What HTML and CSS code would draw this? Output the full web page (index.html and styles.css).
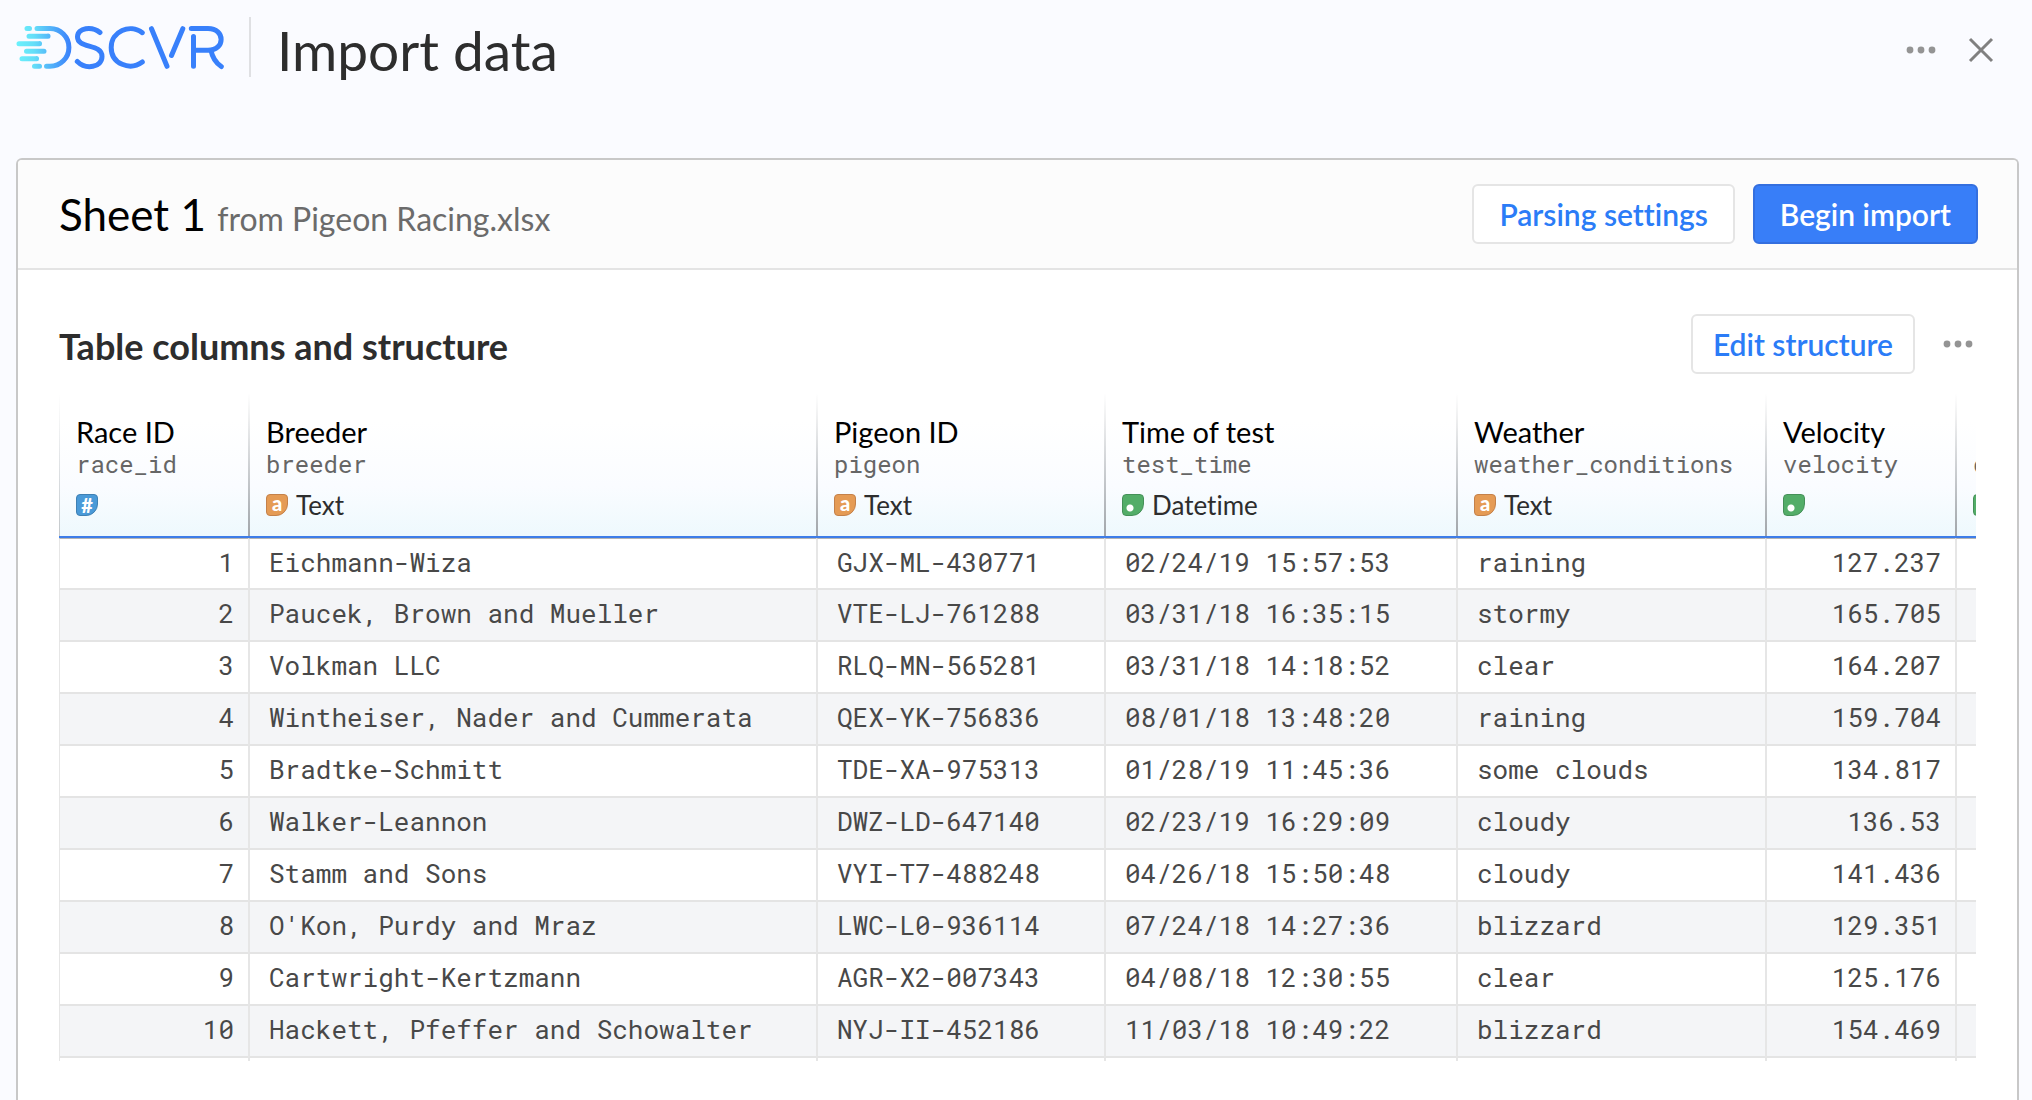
FILE: index.html
```html
<!DOCTYPE html>
<html lang="en">
<head>
<meta charset="utf-8">
<meta name="viewport" content="width=device-width, initial-scale=1">
<title>Import data</title>
<link rel="stylesheet" href="styles.css">
</head>
<body>
<header class="topbar">
  <a class="logo" href="#" aria-label="DSCVR home">
    <svg width="210" height="46" viewBox="15 24 210 46" fill="none" stroke-width="5" stroke-linecap="round" stroke-linejoin="round">
      <defs>
        <linearGradient id="fade" gradientUnits="userSpaceOnUse" x1="18" y1="0" x2="70" y2="0">
          <stop offset="0" stop-color="#6af0fb"/>
          <stop offset=".3" stop-color="#66dff8"/>
          <stop offset="1" stop-color="#3b82fb"/>
        </linearGradient>
      </defs>
      <g stroke="url(#fade)">
        <path d="M27 28.6H29.5V28.5M29 36.2H48V36M19 43.8H39.5V43.6M26.500 51.300H44V51.200M22 58.700H36.500V58.600M34.500 66.300H39.500V66.200"/>
        <path d="M37 28.500H50A18.900 18.900 0 0 1 50 66.300H46.500"/>
      </g>
      <g stroke="#3880fb">
        <path d="M100 32.500C92 26 77.500 27.500 77.500 37C77.500 49 102 43 102 56.500C102 67.500 86 70 77.300 61.500"/>
        <path d="M142.300 32.700C130 23.500 111.200 31 111.200 47.400C111.200 64 130 71 142.300 62"/>
        <path d="M151.500 28.700L167 66.300M182.800 28.700L171.500 55.500"/>
        <path d="M193.500 36.500V66.300M191.300 28.500H208C225.500 28.500 225.500 50.300 208 50.300H195M211 50.500C212.500 58 216 63 221.300 66.500"/>
      </g>
    </svg>
  </a>
  <h1 class="page-title">Import data</h1>
  <button class="icon-button" type="button" aria-label="More options">
    <svg width="30" height="8" viewBox="0 0 30 8" fill="#949494"><circle cx="4" cy="4" r="3.400"/><circle cx="15" cy="4" r="3.400"/><circle cx="26" cy="4" r="3.400"/></svg>
  </button>
  <button class="icon-button" type="button" aria-label="Close">
    <svg width="26" height="26" viewBox="0 0 26 26" stroke="#808080" stroke-width="3"><path d="M2 2L24 24M24 2L2 24"/></svg>
  </button>
</header>

<main class="panel">
  <div class="panel-header">
    <h2 class="sheet">Sheet 1 <span class="source">from Pigeon Racing.xlsx</span></h2>
    <button class="button" type="button">Parsing settings</button>
    <button class="button button-primary" type="button">Begin import</button>
  </div>
  <section class="panel-body">
    <div class="section-header">
      <h3 class="section-title">Table columns and structure</h3>
      <button class="button button-narrow" type="button">Edit structure</button>
      <button class="icon-button" type="button" aria-label="Table options">
        <svg width="30" height="8" viewBox="0 0 30 8" fill="#949494"><circle cx="4" cy="4" r="3.400"/><circle cx="15" cy="4" r="3.400"/><circle cx="26" cy="4" r="3.400"/></svg>
      </button>
    </div>
    <div class="table-wrap">
      <table class="data">
        <colgroup>
          <col class="col-race"><col class="col-breeder"><col class="col-pigeon"><col class="col-time"><col class="col-weather"><col class="col-velocity"><col class="col-next">
        </colgroup>
        <thead>
          <tr>
            <th scope="col"><span class="name">Race ID</span><span class="key">race_id</span><span class="type"><span class="badge badge-id">#</span></span></th>
            <th scope="col"><span class="name">Breeder</span><span class="key">breeder</span><span class="type"><span class="badge badge-text">a</span>Text</span></th>
            <th scope="col"><span class="name">Pigeon ID</span><span class="key">pigeon</span><span class="type"><span class="badge badge-text">a</span>Text</span></th>
            <th scope="col"><span class="name">Time of test</span><span class="key">test_time</span><span class="type"><span class="badge badge-number"></span>Datetime</span></th>
            <th scope="col"><span class="name">Weather</span><span class="key">weather_conditions</span><span class="type"><span class="badge badge-text">a</span>Text</span></th>
            <th scope="col"><span class="name">Velocity</span><span class="key">velocity</span><span class="type"><span class="badge badge-number"></span></span></th>
            <th scope="col"><span class="name">&nbsp;</span><span class="key">distance</span><span class="type"><span class="badge badge-number"></span></span></th>
          </tr>
        </thead>
        <tbody>
          <tr><td class="num">1</td><td>Eichmann-Wiza</td><td>GJX-ML-430771</td><td>02/24/19 15:57:53</td><td>raining</td><td class="num">127.237</td><td></td></tr>
          <tr><td class="num">2</td><td>Paucek, Brown and Mueller</td><td>VTE-LJ-761288</td><td>03/31/18 16:35:15</td><td>stormy</td><td class="num">165.705</td><td></td></tr>
          <tr><td class="num">3</td><td>Volkman LLC</td><td>RLQ-MN-565281</td><td>03/31/18 14:18:52</td><td>clear</td><td class="num">164.207</td><td></td></tr>
          <tr><td class="num">4</td><td>Wintheiser, Nader and Cummerata</td><td>QEX-YK-756836</td><td>08/01/18 13:48:20</td><td>raining</td><td class="num">159.704</td><td></td></tr>
          <tr><td class="num">5</td><td>Bradtke-Schmitt</td><td>TDE-XA-975313</td><td>01/28/19 11:45:36</td><td>some clouds</td><td class="num">134.817</td><td></td></tr>
          <tr><td class="num">6</td><td>Walker-Leannon</td><td>DWZ-LD-647140</td><td>02/23/19 16:29:09</td><td>cloudy</td><td class="num">136.53</td><td></td></tr>
          <tr><td class="num">7</td><td>Stamm and Sons</td><td>VYI-T7-488248</td><td>04/26/18 15:50:48</td><td>cloudy</td><td class="num">141.436</td><td></td></tr>
          <tr><td class="num">8</td><td>O'Kon, Purdy and Mraz</td><td>LWC-L0-936114</td><td>07/24/18 14:27:36</td><td>blizzard</td><td class="num">129.351</td><td></td></tr>
          <tr><td class="num">9</td><td>Cartwright-Kertzmann</td><td>AGR-X2-007343</td><td>04/08/18 12:30:55</td><td>clear</td><td class="num">125.176</td><td></td></tr>
          <tr><td class="num">10</td><td>Hackett, Pfeffer and Schowalter</td><td>NYJ-II-452186</td><td>11/03/18 10:49:22</td><td>blizzard</td><td class="num">154.469</td><td></td></tr>
        </tbody>
        <tfoot>
          <tr><td></td><td></td><td></td><td></td><td></td><td></td><td></td></tr>
        </tfoot>
      </table>
    </div>
  </section>
</main>
</body>
</html>
```
FILE: styles.css
```css
* { box-sizing: border-box; }

body {
  margin: 0;
  min-height: 100vh;
  display: flex;
  flex-direction: column;
  background: #fafbff;
  color: #2d2d2d;
  font-family: Lato, "Open Sans", sans-serif;
  font-variant-ligatures: none;
}

h1, h2, h3 { margin: 0; }

button {
  font-family: inherit;
  font-variant-ligatures: inherit;
  cursor: pointer;
}

/* Top bar */
.topbar {
  display: flex;
  align-items: center;
  height: 100px;
  padding: 0 38px 0 15px;
}

.logo {
  display: flex;
  align-items: center;
  height: 60px;
  margin-bottom: 6px;
  padding-right: 24px;
  border-right: 2px solid #dfe0e3;
}

.page-title {
  flex: 1;
  padding-left: 26px;
  font-size: 55px;
  line-height: 64px;
  font-weight: 400;
}

.icon-button {
  display: flex;
  padding: 0;
  border: 0;
  background: none;
}

.topbar .icon-button + .icon-button { margin-left: 32px; }

/* Panel */
.panel {
  flex: 1;
  margin: 58px 13px 0 16px;
  border: 2px solid #c8c8c8;
  border-bottom: 0;
  border-radius: 6px 6px 0 0;
  background: #fff;
}

.panel-header {
  display: flex;
  align-items: center;
  gap: 18px;
  height: 110px;
  padding: 0 39px 0 41px;
  border-bottom: 2px solid #e4e4e4;
  border-radius: 4px 4px 0 0;
  background: #fcfcfc;
}

.sheet {
  flex: 1;
  padding-top: 4px;
  color: #000;
  font-size: 44px;
  line-height: 52px;
  font-weight: 400;
}

.source {
  color: #6b6b6b;
  font-size: 32px;
}

.button {
  height: 60px;
  padding: 0 25px;
  border: 2px solid #e5e5e5;
  border-radius: 6px;
  background: #fff;
  color: #2b7cf7;
  font-size: 30px;
  line-height: 36px;
  font-weight: 600;
}

.button-narrow { padding: 0 20px; }

.button-primary {
  border-color: #346fdf;
  background: #387ef8;
  color: #fff;
}

.panel-body { padding: 44px 41px 39px; }

.section-header {
  display: flex;
  align-items: center;
  padding-right: 3px;
}

.section-title {
  flex: 1;
  padding-top: 4px;
  font-size: 36px;
  line-height: 44px;
  font-weight: 700;
}

.section-header .icon-button { margin-left: 28px; }

/* Data table */
.table-wrap {
  margin-top: 19px;
  overflow-x: auto;
  scrollbar-width: none;
}

.data {
  width: 2100px;
  table-layout: fixed;
  border-collapse: separate;
  border-spacing: 0;
}

.col-race { width: 189px; }
.col-breeder { width: 568px; }
.col-pigeon { width: 288px; }
.col-time { width: 352px; }
.col-weather { width: 309px; }
.col-velocity { width: 190px; }

.data th {
  height: 145px;
  padding: 21px 0 0 18px;
  border-bottom: 2px solid #3d7de8;
  background:
    linear-gradient(to bottom, rgba(150, 154, 158, 0), #a2a6aa) left top / 2px 100% no-repeat,
    linear-gradient(to bottom, #fff 20%, #fafcff 65%, #eef9fd);
  text-align: left;
  vertical-align: top;
  font-weight: 400;
}

.data th:first-child {
  padding-left: 17px;
  background:
    linear-gradient(to bottom, rgba(190, 194, 198, 0), #c4c8cb) left top / 1px 100% no-repeat,
    linear-gradient(to bottom, #fff 20%, #fafcff 65%, #eef9fd);
}

.name, .key { display: block; }

.name {
  color: #000;
  font-size: 29px;
  line-height: 36px;
}

.key {
  color: #666;
  font-family: "Roboto Mono", "Liberation Mono", monospace;
  font-size: 24px;
  line-height: 28px;
}

.type {
  display: flex;
  align-items: center;
  gap: 8px;
  height: 32px;
  margin-top: 11px;
  font-size: 26px;
  line-height: 32px;
}

.badge {
  display: flex;
  align-items: center;
  justify-content: center;
  width: 22px;
  height: 22px;
  border: 1px solid;
  border-radius: 4px 4px 12px 4px;
  color: #fff;
  font-size: 20px;
  line-height: 20px;
  font-weight: 900;
}

.badge-id { border-color: #3f80b3; background: #4a9ad8; }

.badge-text {
  padding-bottom: 4px;
  border-color: #c4814a;
  background: #e59b55;
}

.badge-number {
  border-color: #459058;
  background: radial-gradient(circle at 7px 13px, #fff 3px, #53ad68 4px);
}

.data td {
  height: 52px;
  padding: 0 14px 4px 19px;
  border-left: 2px solid #e6e6e6;
  border-bottom: 2px solid #e4e4e4;
  color: #484848;
  font-family: "Roboto Mono", "Liberation Mono", monospace;
  font-size: 26px;
  line-height: 32px;
  white-space: nowrap;
}

.data td:first-child { border-left-width: 1px; }
.data .num { text-align: right; }
.data tbody tr:first-child td { border-top: 1px solid #b4b4b4; }
.data tbody tr:nth-child(even) td { background: #f4f5f7; }

.data tfoot td {
  height: 3px;
  padding: 0;
  border-bottom: 0;
}
```
